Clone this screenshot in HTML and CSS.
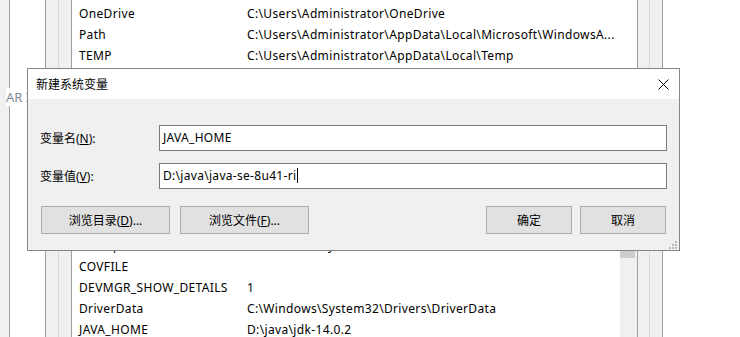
FILE: index.html
```html
<!DOCTYPE html>
<html lang="zh-CN">
<head>
  <meta charset="UTF-8" />
  <title>新建系统变量</title>
  <link rel="stylesheet" href="styles.css">
</head>
<body>
  <div class="desk">
    <div class="side"></div>
    <div class="pane"></div>
    <div class="frame"></div>
    <div class="frame frame-dark"></div>

    <div class="lists">
      <div class="list list-top">
        <div class="row"><span class="name">OneDrive</span><span class="value">C:\Users\Administrator\OneDrive</span></div>
        <div class="row"><span class="name">Path</span><span class="value">C:\Users\Administrator\AppData\Local\Microsoft\WindowsA...</span></div>
        <div class="row"><span class="name">TEMP</span><span class="value">C:\Users\Administrator\AppData\Local\Temp</span></div>
      </div>

      <div class="list list-bottom">
        <div class="rows">
          <div class="row"><span class="name">ComSpec</span><span class="value">C:\Windows\system32\cmd.exe</span></div>
          <div class="row"><span class="name">COVFILE</span><span class="value"></span></div>
          <div class="row"><span class="name">DEVMGR_SHOW_DETAILS</span><span class="value">1</span></div>
          <div class="row"><span class="name">DriverData</span><span class="value">C:\Windows\System32\Drivers\DriverData</span></div>
          <div class="row"><span class="name">JAVA_HOME</span><span class="value">D:\java\jdk-14.0.2</span></div>
        </div>
        <div class="scrollbar"><div class="thumb"></div></div>
      </div>
    </div>

    <div class="frame frame-right"></div>
    <div class="frame frame-right2"></div>
    <div class="outside"></div>
  </div>

  <span class="group-label">AR I</span>

  <div class="dialog">
    <div class="dialog-title">
      <span>新建系统变量</span>
      <svg class="close" width="11" height="11" viewBox="0 0 11 11">
        <path d="M0.5 0.5L10.5 10.5M10.5 0.5L0.5 10.5" stroke="#000" stroke-width="1" fill="none"/>
      </svg>
    </div>
    <div class="dialog-body">
      <div class="form">
        <label>变量名(<u>N</u>):</label>
        <div class="field">JAVA_HOME</div>
        <label>变量值(<u>V</u>):</label>
        <div class="field">D:\java\java-se-8u41-ri<span class="caret"></span></div>
      </div>
      <div class="buttons">
        <button class="btn btn-wide">浏览目录(<u>D</u>)...</button>
        <button class="btn btn-wide">浏览文件(<u>F</u>)...</button>
        <span class="spacer"></span>
        <button class="btn">确定</button>
        <button class="btn">取消</button>
      </div>
    </div>
    <svg class="grip" width="8" height="8" viewBox="0 0 8 8">
      <rect x="6" y="0" width="2" height="2" fill="#bcbcbc"/>
      <rect x="3" y="3" width="2" height="2" fill="#bcbcbc"/>
      <rect x="6" y="3" width="2" height="2" fill="#bcbcbc"/>
      <rect x="0" y="6" width="2" height="2" fill="#bcbcbc"/>
      <rect x="3" y="6" width="2" height="2" fill="#bcbcbc"/>
      <rect x="6" y="6" width="2" height="2" fill="#bcbcbc"/>
    </svg>
  </div>
</body>
</html>
```

FILE: styles.css
```css
* { box-sizing: border-box; }
body { margin: 0; width: 740px; height: 337px; overflow: hidden; position: relative; background: #fff; color: #000; font-family: "Noto Sans", "Noto Sans CJK SC", sans-serif; font-size: 12px; }

/* window behind the dialog */
.desk { display: flex; height: 337px; }
.side { width: 10px; background: #f0f0f0; border-right: 1px solid #a0a0a0; }
.pane { width: 36px; border-right: 1px solid #a0a0a0; }
.frame { width: 13px; background: #f0f0f0; border-right: 1px solid #dadada; }
.frame-dark { border-right-color: #a0a0a0; }
.frame-right { border-left: 1px solid #a0a0a0; }
.frame-right2 { border-right-color: #a0a0a0; }
.outside { flex: 1; }

.lists { width: 565px; display: flex; flex-direction: column; justify-content: space-between; }
.list-top { padding-top: 3px; }
.list-bottom { height: 102px; display: flex; overflow: hidden; }
.rows { flex: 1; }
.row { display: flex; height: 21px; line-height: 21px; padding-left: 7px; white-space: nowrap; letter-spacing: 0.35px; }
.name { width: 168px; }
.scrollbar { width: 17px; background: #f0f0f0; padding-top: 15px; }
.thumb { width: 15px; height: 8px; background: #cdcdcd; }

.group-label { position: absolute; left: 6px; top: 88px; line-height: 18px; font-size: 13px; color: #7f8a96; background: #fff; }

/* dialog */
.dialog { position: absolute; left: 27px; top: 68px; width: 653px; height: 183px; border: 1px solid #858585; background: #f0f0f0; display: flex; flex-direction: column; }
.dialog-title { height: 30px; background: #fff; display: flex; align-items: center; justify-content: space-between; padding: 0 10px 0 8px; }
.dialog-body { padding: 26px 12px 0 12px; }
.form { display: grid; grid-template-columns: 119px 1fr; row-gap: 12px; align-items: center; }
.field { height: 26px; line-height: 24px; padding-left: 3px; background: #fff; border: 1px solid #7a7a7a; white-space: nowrap; letter-spacing: 0.3px; }
.caret { display: inline-block; width: 1px; height: 15px; background: #000; vertical-align: -3px; margin-left: 1px; }

.buttons { display: flex; gap: 10px; margin: 17px 1px 0 1px; }
.spacer { flex: 1; }
.btn { width: 86px; height: 28px; padding: 0; background: #e1e1e1; border: 1px solid #adadad; font: inherit; color: #000; }
.btn-wide { width: 129px; }
.buttons .btn:last-child { margin-left: -2px; }
.grip { position: absolute; right: 2px; bottom: 1px; }
```
